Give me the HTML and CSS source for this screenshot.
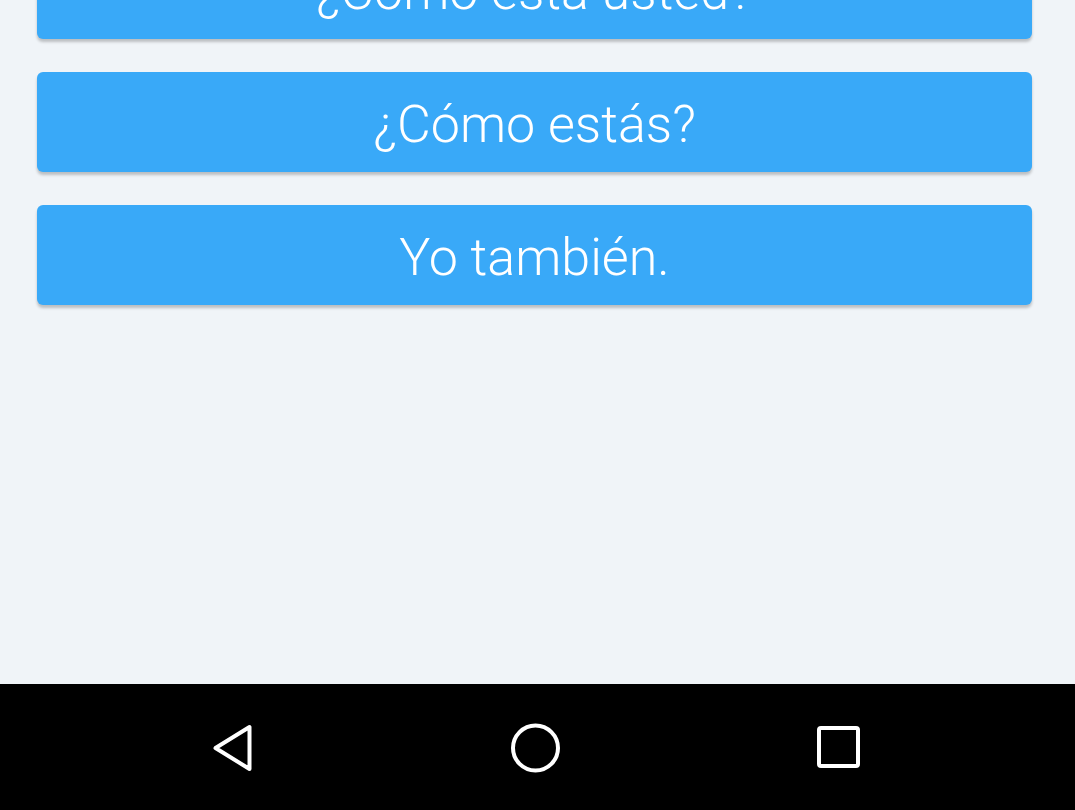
FILE: index.html
```html
<!DOCTYPE html>
<html lang="es">
<head>
<meta charset="utf-8">
<link rel="stylesheet" href="styles.css">
</head>
<body>
<div class="screen">
  <main class="content">
    <div class="options">
      <button class="option">¿Cómo está usted?</button>
      <button class="option">¿Cómo estás?</button>
      <button class="option">Yo también.</button>
    </div>
  </main>
  <nav class="navbar">
    <svg class="nav-icon" width="50" height="50" viewBox="0 0 50 50">
      <path d="M41.5 4 L41.5 46 L7.5 25 Z" fill="none" stroke="#fff" stroke-width="4" stroke-linejoin="round"/>
    </svg>
    <svg class="nav-icon" width="50" height="50" viewBox="0 0 50 50">
      <circle cx="24.5" cy="25" r="22.5" fill="none" stroke="#fff" stroke-width="4"/>
    </svg>
    <svg class="nav-icon" width="50" height="50" viewBox="0 0 50 50">
      <rect x="5" y="5" width="39" height="38" rx="2" fill="none" stroke="#fff" stroke-width="4"/>
    </svg>
  </nav>
</div>
</body>
</html>
```

FILE: styles.css
```css
html, body {
  margin: 0;
  padding: 0;
  height: 100%;
}
body {
  background: #f0f4f8;
  font-family: Roboto, "Liberation Sans", sans-serif;
}
.screen {
  height: 810px;
  display: flex;
  flex-direction: column;
  overflow: hidden;
}
.content {
  flex: 1;
  overflow: hidden;
  padding: 0 43px 0 37px;
}
.options {
  margin-top: -61px;
  display: flex;
  flex-direction: column;
  gap: 33px;
}
.option {
  height: 100px;
  width: 100%;
  border: none;
  border-radius: 6px;
  background: #39a9f8;
  color: #fff;
  font-family: Roboto, "Liberation Sans", sans-serif;
  font-weight: 300;
  font-size: 52px;
  line-height: 94px;
  padding: 6px 0 0;
  box-shadow: 0 3px 3px rgba(0, 0, 0, 0.22);
}
.navbar {
  height: 126px;
  background: #000;
  display: flex;
  align-items: center;
  justify-content: center;
  gap: 253px;
  padding-right: 4px;
  padding-top: 1px;
  box-sizing: border-box;
  flex-shrink: 0;
}
.nav-icon {
  display: block;
}
```
